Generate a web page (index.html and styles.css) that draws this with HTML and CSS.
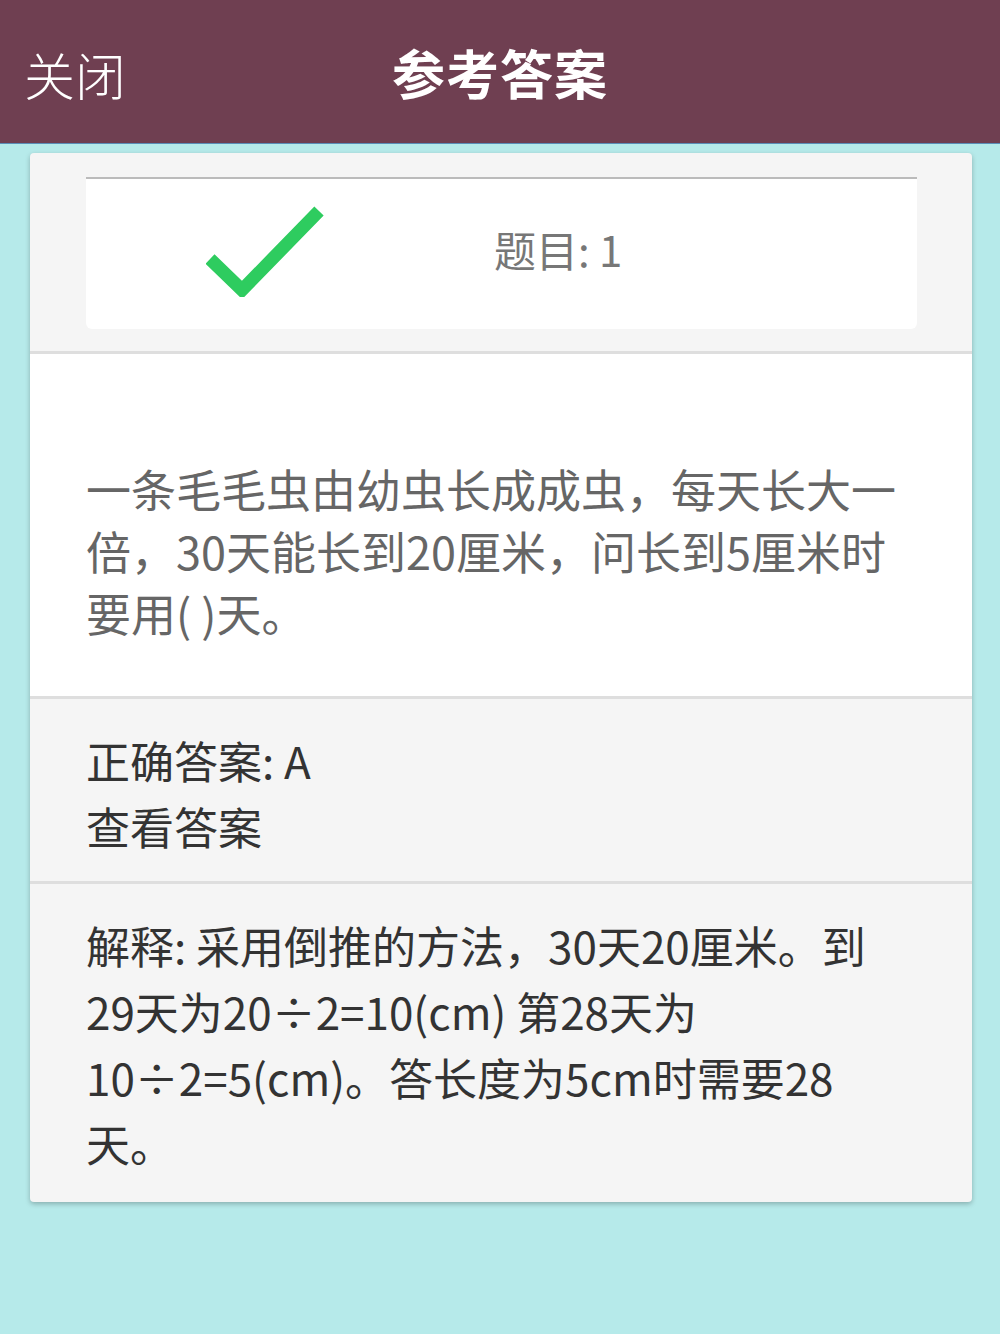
FILE: index.html
```html
<!DOCTYPE html>
<html lang="zh-CN">
<head>
    <meta charset="UTF-8">
    <meta name="viewport" content="width=device-width, initial-scale=1.0">
    <title>参考答案</title>
    <link rel="stylesheet" href="styles.css">
</head>
<body>
    <div class="header">
        <span class="close">关闭</span>
        <span class="title">参考答案</span>
    </div>

    <div class="card">
        <div class="top">
            <div class="result">
                <svg class="check" width="118" height="92" viewBox="0 0 118 92">
                    <polyline points="4,54 36,85 113,6" fill="none" stroke="#2ecc5f" stroke-width="13"/>
                </svg>
                <span class="num">题目: 1</span>
            </div>
        </div>

        <div class="question">
            一条毛毛虫由幼虫长成成虫，每天长大一倍，30天能长到20厘米，问长到5厘米时要用( )天。
        </div>

        <div class="answer">
            <p>正确答案: A</p>
            <p>查看答案</p>
        </div>

        <div class="explain">
            解释: 采用倒推的方法，30天20厘米。到<br>29天为20÷2=10(cm) 第28天为<br>10÷2=5(cm)。答长度为5cm时需要28<br>天。
        </div>
    </div>
</body>
</html>
```

FILE: styles.css
```css
/* Basic Reset */
* {
    margin: 0;
    padding: 0;
    box-sizing: border-box;
}

body {
    font-family: "Noto Sans CJK SC", "Noto Sans", sans-serif;
    background-color: #b6eaea;
    width: 1000px;
    height: 1334px;
}

/* Header */
.header {
    position: relative;
    height: 144px;
    background-color: #6f3f51;
    border-bottom: 1px solid #5a8fb8;
    color: #fff;
    display: flex;
    align-items: center;
    justify-content: center;
}

.header .close {
    position: absolute;
    left: 24px;
    top: 42px;
    font-size: 51px;
    line-height: 64px;
    font-weight: 300;
}

.header .title {
    font-size: 53px;
    font-weight: bold;
    letter-spacing: 1px;
}

/* Card */
.card {
    margin: 9px 28px 0 30px;
    background-color: #f5f5f5;
    border-radius: 4px;
    box-shadow: 0 2px 5px rgba(0, 0, 0, 0.25);
    overflow: hidden;
}

.top {
    padding: 24px 55px 22px 56px;
    border-bottom: 3px solid #dedede;
}

.result {
    height: 152px;
    background-color: #fff;
    border-top: 2px solid #bbb;
    border-radius: 0 0 6px 6px;
    display: flex;
    align-items: center;
    padding-left: 120px;
}

.check {
    margin-bottom: 6px;
}

.num {
    margin-left: 170px;
    margin-bottom: 12px;
    font-size: 42px;
    color: #777;
}

/* Question */
.question {
    background-color: #fff;
    padding: 104px 50px 52px 56px;
    font-size: 45px;
    line-height: 62px;
    color: #666;
    border-bottom: 3px solid #dedede;
}

/* Answer */
.answer {
    padding: 28px 56px 22px;
    font-size: 44px;
    line-height: 66px;
    color: #333;
    border-bottom: 3px solid #dedede;
}

.explain {
    padding: 28px 50px 26px 56px;
    font-size: 44px;
    line-height: 66px;
    color: #333;
}
```
